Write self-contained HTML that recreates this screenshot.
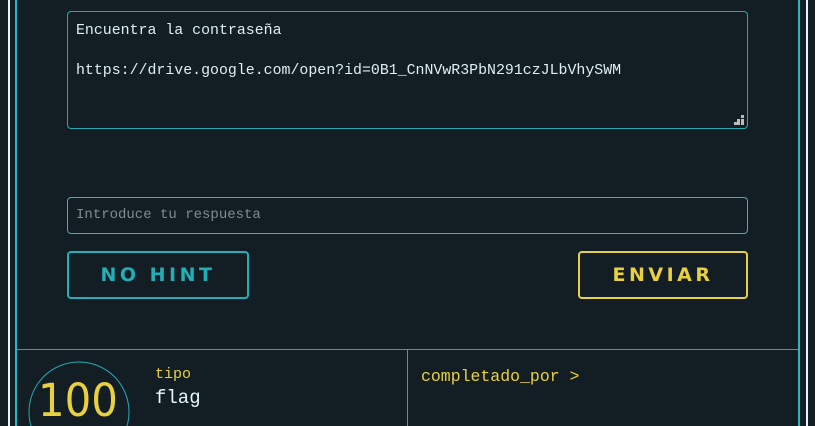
<!DOCTYPE html>
<html><head><meta charset="utf-8"><style>
*{margin:0;padding:0;box-sizing:border-box}
html,body{width:815px;height:426px;overflow:hidden;background:#131e24}
#w{position:relative;width:815px;height:426px;overflow:hidden;font-family:"Liberation Mono",monospace}
.l{position:absolute;top:0;height:426px}
.ta{position:absolute;left:67px;top:11px;width:681px;height:118px;border:1px solid #23a9b4;border-radius:4px;color:#dfeef0;font-size:14.9px;padding:9px 8px;line-height:20px}
.in{position:absolute;left:67px;top:197px;width:681px;height:37px;border:1px solid #4fa9b0;border-radius:4px;color:#7f8c90;font-size:14px;padding:9px 8px}
.btn{position:absolute;top:251px;height:48px;border:2px solid;border-radius:4px;font-family:"DejaVu Sans",sans-serif;font-weight:bold;font-size:19px;letter-spacing:3.5px;text-align:center;line-height:44px}
</style></head><body><div id="w">
<div class="l" style="left:8px;width:2px;background:#e6f6f8"></div>
<div class="l" style="left:15px;width:2px;background:#23b8c4"></div>
<div class="l" style="left:798px;width:2px;background:#23b8c4"></div>
<div class="l" style="left:806px;width:2px;background:#e6f6f8"></div>
<div class="ta">Encuentra la contraseña<br><br>https://drive.google.com/open?id=0B1_CnNVwR3PbN291czJLbVhySWM
<svg style="position:absolute;right:3px;bottom:3px" width="10" height="10"><g fill="#bbb"><rect x="7" y="0" width="3" height="3"/><rect x="3" y="4" width="3" height="3"/><rect x="7" y="4" width="3" height="3"/><rect x="0" y="7" width="3" height="3"/><rect x="3" y="7" width="3" height="3"/><rect x="7" y="7" width="3" height="3"/></g></svg></div>
<div class="in">Introduce tu respuesta</div>
<div class="btn" style="left:67px;width:182px;border-color:#23aeb8;color:#23aeb8">NO HINT</div>
<div class="btn" style="left:578px;width:170px;border-color:#e8d040;color:#e8d040">ENVIAR</div>
<div style="position:absolute;left:17px;top:349px;width:781px;height:1px;background:#23a9b4"></div>
<div style="position:absolute;left:407px;top:350px;width:1px;height:76px;background:#23a9b4"></div>
<svg style="position:absolute;left:28px;top:361px" width="102" height="65"><circle cx="51" cy="51" r="50" fill="none" stroke="#23a9b4" stroke-width="1"/></svg>
<div style="position:absolute;left:38px;top:376px;height:50px;font-family:'DejaVu Sans',sans-serif;font-size:45px;color:#e8d040;line-height:50px;transform:scaleX(0.93);transform-origin:left">100</div>
<div style="position:absolute;left:155px;top:366px;font-size:15px;color:#e8d040">tipo</div>
<div style="position:absolute;left:155px;top:387px;font-size:19px;color:#e6f6f8">flag</div>
<div style="position:absolute;left:421px;top:367px;font-size:16.5px;color:#e8d040">completado_por &gt;</div>
</div></body></html>
